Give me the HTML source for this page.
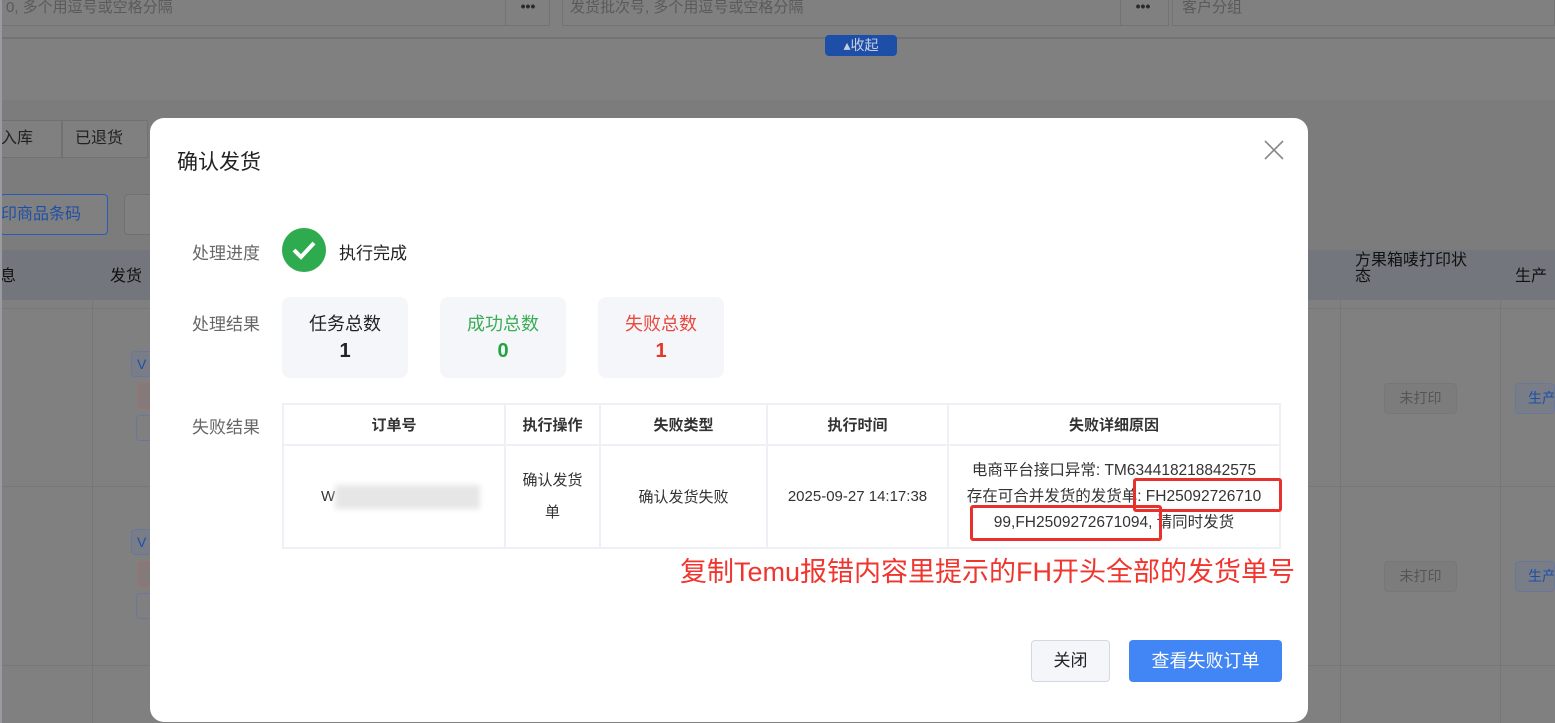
<!DOCTYPE html><html><head><meta charset="utf-8"><style>
*{box-sizing:border-box;margin:0;padding:0}
html,body{width:1555px;height:723px;overflow:hidden}
body{background:#808080;font-family:"Liberation Sans","Noto Sans CJK SC",sans-serif;position:relative;color:#333}
.a{position:absolute}
table{border-collapse:collapse}
</style></head><body>
<svg class="a" style="left:0;top:0" width="1555" height="723"><rect x="0" y="0" width="1555" height="723" fill="#808080"/><rect x="0" y="100" width="1555" height="150" fill="#7c7c7c"/><rect x="0" y="250" width="1555" height="50" fill="#73767c"/></svg>
<div class="a" style="left:0;top:0;width:550px;height:26px;border:1px solid #737373;border-top:0"></div>
<div class="a" style="left:6px;top:-4px;font-size:15px;color:#5a5a5a">0, 多个用逗号或空格分隔</div>
<div class="a" style="left:505px;top:0;width:45px;height:26px;border-left:1px solid #737373;text-align:center;color:#2a2a2a;font-size:14px;font-weight:bold;line-height:12px">•••</div>
<div class="a" style="left:562px;top:0;width:607px;height:26px;border:1px solid #737373;border-top:0"></div>
<div class="a" style="left:570px;top:-4px;font-size:15px;color:#5a5a5a">发货批次号, 多个用逗号或空格分隔</div>
<div class="a" style="left:1120px;top:0;width:45px;height:26px;border-left:1px solid #737373;text-align:center;color:#2a2a2a;font-size:14px;font-weight:bold;line-height:12px">•••</div>
<div class="a" style="left:1172px;top:0;width:383px;height:26px;border:1px solid #737373;border-top:0"></div>
<div class="a" style="left:1182px;top:-4px;font-size:15px;color:#5a5a5a">客户分组</div>
<div class="a" style="left:0;top:37px;width:1555px;height:2px;background:#737373"></div>
<div class="a" style="left:825px;top:35px;width:72px;height:21px;background:#1e4fa8;border-radius:4px;color:#c8d0e0;font-size:14px;line-height:21px;text-align:center">▴收起</div>
<div class="a" style="left:0;top:120px;width:62px;height:38px;border:1px solid #717171;background:#808080;font-size:16px;line-height:36px;color:#222">入库</div>
<div class="a" style="left:62px;top:120px;width:86px;height:38px;border:1px solid #717171;background:#808080;font-size:16px;line-height:36px;color:#222;padding-left:12px">已退货</div>
<div class="a" style="left:0;top:194px;width:108px;height:41px;border:1px solid #2a5bb8;border-radius:4px;background:#808080;font-size:16px;line-height:39px;color:#1e4fa8">印商品条码</div>
<div class="a" style="left:124px;top:194px;width:40px;height:41px;border:1px solid #717171;border-radius:4px;background:#808080"></div>
<div class="a" style="left:0;top:262px;font-size:16px;color:#111">息</div>
<div class="a" style="left:110px;top:262px;font-size:16px;color:#111">发货</div>
<div class="a" style="left:1355px;top:253px;font-size:16px;color:#111;line-height:16px">方果箱唛打印状<br>态</div>
<div class="a" style="left:1500px;top:250px;width:1px;height:473px;background:#777"></div>
<div class="a" style="left:1340px;top:300px;width:1px;height:423px;background:#777"></div>
<div class="a" style="left:92px;top:250px;width:1px;height:473px;background:#777"></div>
<div class="a" style="left:1515px;top:262px;font-size:16px;color:#111;white-space:nowrap">生产</div>
<div class="a" style="left:0;top:308px;width:1555px;height:1px;background:#777"></div>
<div class="a" style="left:0;top:486px;width:1555px;height:1px;background:#777"></div>
<div class="a" style="left:0;top:665px;width:1555px;height:1px;background:#777"></div>
<div class="a" style="left:1384px;top:383px;width:73px;height:31px;border:1px solid #777;border-radius:4px;background:#7c7c7c;font-size:14px;color:#555;text-align:center;line-height:29px">未打印</div>
<div class="a" style="left:1384px;top:561px;width:73px;height:31px;border:1px solid #777;border-radius:4px;background:#7c7c7c;font-size:14px;color:#555;text-align:center;line-height:29px">未打印</div>
<div class="a" style="left:1515px;top:383px;width:40px;height:31px;border:1px solid #6a7898;border-radius:4px;background:#787d88;font-size:14px;color:#1e4fa8;line-height:29px;padding-left:12px;white-space:nowrap;overflow:hidden">生产</div>
<div class="a" style="left:1515px;top:561px;width:40px;height:31px;border:1px solid #6a7898;border-radius:4px;background:#787d88;font-size:14px;color:#1e4fa8;line-height:29px;padding-left:12px;white-space:nowrap;overflow:hidden">生产</div>
<div class="a" style="left:131px;top:351px;width:25px;height:26px;border:1px solid #6a7898;border-radius:4px;background:#787d88;color:#1e4fa8;font-size:14px;line-height:24px;padding-left:5px">V</div>
<div class="a" style="left:138px;top:383px;width:18px;height:26px;border:1px solid #a07070;border-radius:4px;background:#857a7a"></div>
<div class="a" style="left:136px;top:415px;width:20px;height:26px;border:1px solid #6a7898;border-radius:4px"></div>
<div class="a" style="left:131px;top:529px;width:25px;height:26px;border:1px solid #6a7898;border-radius:4px;background:#787d88;color:#1e4fa8;font-size:14px;line-height:24px;padding-left:5px">V</div>
<div class="a" style="left:138px;top:561px;width:18px;height:26px;border:1px solid #a07070;border-radius:4px;background:#857a7a"></div>
<div class="a" style="left:136px;top:593px;width:20px;height:26px;border:1px solid #6a7898;border-radius:4px"></div>
<div class="a" style="left:0;top:0;width:2px;height:723px;background:#9a9aa0"></div>

<!-- modal -->
<div class="a" style="left:150px;top:118px;width:1158px;height:604px;background:#fff;border-radius:14px"></div>
<div class="a" style="left:177px;top:146px;font-size:21px;color:#222">确认发货</div>
<svg class="a" style="left:1263px;top:139px" width="22" height="22"><path d="M2 2L20 20M20 2L2 20" stroke="#888" stroke-width="1.6"/></svg>
<div class="a" style="left:192px;top:239px;font-size:17px;color:#666">处理进度</div>
<svg class="a" style="left:281px;top:227px" width="46" height="46"><circle cx="23" cy="23" r="22" fill="#2eab4f"/><path d="M13 23l7 7 13-14" fill="none" stroke="#fff" stroke-width="4"/></svg>
<div class="a" style="left:339px;top:239px;font-size:17px;color:#222">执行完成</div>
<div class="a" style="left:192px;top:310px;font-size:17px;color:#666">处理结果</div>
<div class="a" style="left:282px;top:297px;width:126px;height:81px;background:#f5f6fa;border-radius:8px;text-align:center;padding-top:13px;font-size:18px;color:#222">任务总数<div style="font-weight:bold;font-size:20px;margin-top:4px">1</div></div>
<div class="a" style="left:440px;top:297px;width:126px;height:81px;background:#f5f6fa;border-radius:8px;text-align:center;padding-top:13px;font-size:18px;color:#3aad55">成功总数<div style="font-weight:bold;font-size:20px;margin-top:4px;color:#23a340">0</div></div>
<div class="a" style="left:598px;top:297px;width:126px;height:81px;background:#f5f6fa;border-radius:8px;text-align:center;padding-top:13px;font-size:18px;color:#e84a3f">失败总数<div style="font-weight:bold;font-size:20px;margin-top:4px;color:#e3372a">1</div></div>
<div class="a" style="left:192px;top:413px;font-size:17px;color:#666">失败结果</div>
<table class="a" style="left:282px;top:403px;width:999px;font-size:15px;color:#333;text-align:center">
<tr style="height:41px;font-weight:bold"><td style="border:2px solid #eef0f6;width:222px">订单号</td><td style="border:2px solid #eef0f6;width:95px">执行操作</td><td style="border:2px solid #eef0f6;width:167px">失败类型</td><td style="border:2px solid #eef0f6;width:181px">执行时间</td><td style="border:2px solid #eef0f6">失败详细原因</td></tr>
<tr style="height:103px"><td style="border:2px solid #eef0f6;text-align:left;padding-left:37px">W<span style="display:inline-block;width:145px;height:24px;background:#e6e6e6;vertical-align:middle;filter:blur(3px)"></span></td><td style="border:2px solid #eef0f6;line-height:32px">确认发货<br>单</td><td style="border:2px solid #eef0f6">确认发货失败</td><td style="border:2px solid #eef0f6">2025-09-27 14:17:38</td><td style="border:2px solid #eef0f6;line-height:26px;font-size:15.5px;white-space:nowrap">电商平台接口异常: TM634418218842575<br>存在可合并发货的发货单: FH25092726710<br>99,FH2509272671094, 请同时发货</td></tr>
</table>
<div class="a" style="left:1133px;top:478px;width:149px;height:34px;border:3px solid #e8302c;border-radius:3px"></div>
<div class="a" style="left:970px;top:505px;width:192px;height:36px;border:3px solid #e8302c;border-radius:3px"></div>
<div class="a" style="left:680px;top:550px;font-size:27px;color:#f0352e;white-space:nowrap">复制Temu报错内容里提示的FH开头全部的发货单号</div>
<div class="a" style="left:1031px;top:640px;width:79px;height:42px;border:1px solid #d5d8e0;background:#f5f6fa;border-radius:4px;font-size:17px;line-height:40px;text-align:center;color:#222">关闭</div>
<div class="a" style="left:1129px;top:640px;width:153px;height:42px;background:#4285f4;border-radius:4px;font-size:18px;line-height:42px;text-align:center;color:#fff">查看失败订单</div>
</body></html>
